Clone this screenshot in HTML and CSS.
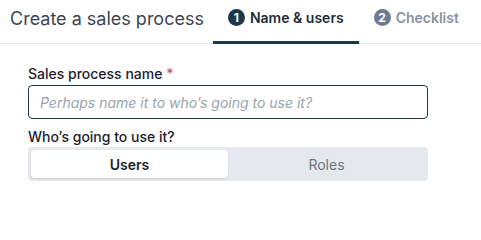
FILE: index.html
```html
<!DOCTYPE html>
<html>
<head>
<meta charset="utf-8">
<link rel="stylesheet" href="styles.css">
</head>
<body>
<div class="header">
  <h1 class="title">Create a sales process</h1>
  <div class="tab active"><span class="num">1</span><span>Name &amp; users</span></div>
  <div class="tab"><span class="num">2</span><span>Checklist</span></div>
</div>
<div class="form">
  <label class="label">Sales process name <span class="req">*</span></label>
  <div class="input"><span class="ph">Perhaps name it to who’s going to use it?</span></div>
  <label class="label label2">Who’s going to use it?</label>
  <div class="seg">
    <div class="opt on">Users</div>
    <div class="opt">Roles</div>
  </div>
</div>
</body>
</html>
```
FILE: styles.css
```css
* { box-sizing: border-box; }
html, body { margin: 0; padding: 0; background: #fff; }
body { font-family: Inter, "Noto Sans", sans-serif; color: #1f2937; width: 481px; height: 205px; overflow: hidden; }
.header { display: flex; align-items: stretch; height: 44px; border-bottom: 1px solid #e3e6ea; padding-left: 10px; white-space: nowrap; }
.title { margin: 0; font-size: 18px; font-weight: 400; color: #3d4551; line-height: 38px; margin-right: 9px; flex-shrink: 0; }
.tab { flex-shrink: 0; display: flex; align-items: center; gap: 5px; padding: 0 15px 6px 15px; height: 44px; margin-bottom: -1px; font-size: 14px; font-weight: 600; color: #8a93a0; border-bottom: 3px solid transparent; }
.tab .num { width: 17px; height: 17px; border-radius: 50%; background: #6e7b90; color: #fff; font-size: 12px; font-weight: 700; display: flex; align-items: center; justify-content: center; }
.tab.active { color: #1f2d3a; border-bottom-color: #1b3a47; }
.tab.active .num { background: #1b3a47; }
.form { padding: 21px 0 0 28px; width: 428px; display: flex; flex-direction: column; }
.label { font-size: 14px; font-weight: 500; color: #1d232b; line-height: 17px; }
.req { color: #d9534f; }
.input { margin-top: 3px; height: 34px; border: 1px solid #1e3440; border-radius: 4px; display: flex; align-items: center; padding-left: 11px; }
.ph { font-style: italic; font-size: 14px; color: #9aa3ae; }
.label2 { margin-top: 9px; }
.seg { margin-top: 2px; height: 34px; background: #e5e9ee; border-radius: 4px; padding: 3px; display: flex; }
.opt { flex: 1; display: flex; align-items: center; justify-content: center; font-size: 14px; font-weight: 400; color: #6b7685; border-radius: 4px; }
.opt.on { background: #fff; color: #1d232b; font-weight: 600; box-shadow: 0 1px 2px rgba(0,0,0,0.12); }
```
